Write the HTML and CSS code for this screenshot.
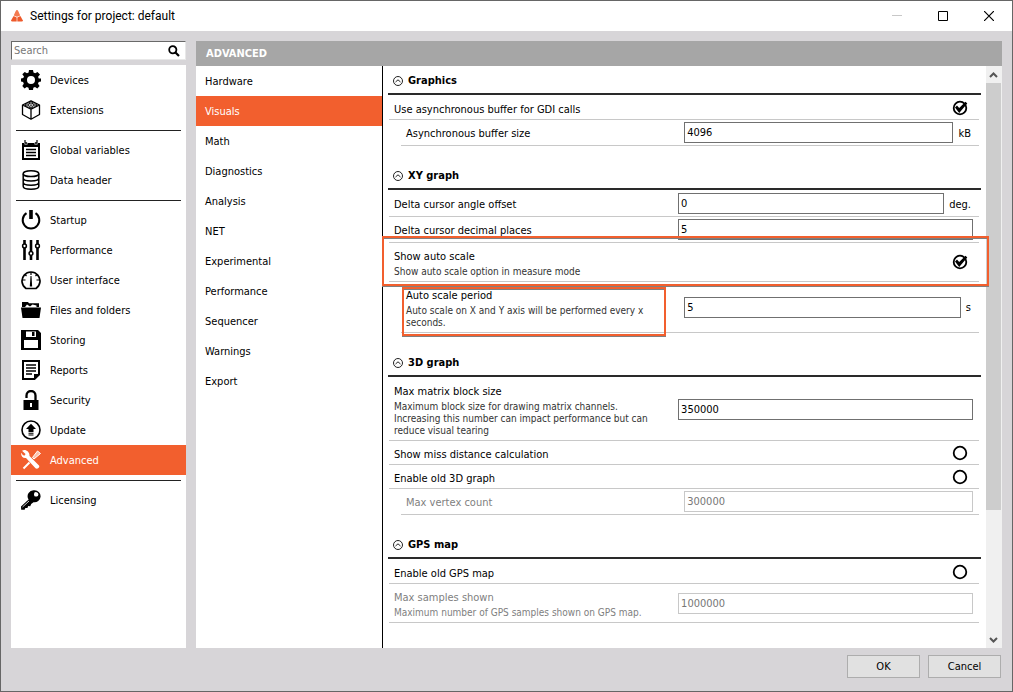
FILE: index.html
```
<!DOCTYPE html>
<html lang="en">
<head>
    <meta charset="UTF-8">
    <meta name="viewport" content="width=device-width, initial-scale=1.0">
    <title>Settings for project: default</title>
    <link rel="stylesheet" href="styles.css">
</head>
<body>
    <div class="window">
        <header class="titlebar">
            <svg class="logo" width="12" height="12" viewBox="0 0 12 12"><path d="M6 0C7 0 7.500 1.500 9.200 5.500L6 6.800 2.800 5.500C4.500 1.500 5 0 6 0z" fill="#f47a50"/><path d="M2.600 6 5.700 7.400V11.500H1.200C0 11.500-.2 11 .2 10.200z" fill="#ee5a2c"/><path d="M9.400 6 6.300 7.400V11.500h4.500c1.200 0 1.400-.5 1-1.300z" fill="#ee5a2c"/></svg>
            <h1>Settings for project: default</h1>
            <div class="window-buttons">
                <button type="button" aria-label="Minimize"><svg width="10" height="10" viewBox="0 0 10 10"><path d="M0 4.500h10" stroke="#c8c8c8"/></svg></button>
                <button type="button" aria-label="Maximize"><svg width="10" height="10" viewBox="0 0 10 10"><path d="M.5.500h9v9h-9z" fill="none" stroke="#000"/></svg></button>
                <button type="button" aria-label="Close"><svg width="10" height="10" viewBox="0 0 10 10"><path d="M0 0l10 10M10 0 0 10" stroke="#000" stroke-width="1.200"/></svg></button>
            </div>
        </header>

        <div class="body">
            <aside class="sidebar">
                <div class="search">
                    <input type="text" placeholder="Search" aria-label="Search">
                    <svg width="12" height="12" viewBox="0 0 12 12"><circle cx="4.800" cy="4.800" r="3.600" fill="none" stroke="#000" stroke-width="1.800"/><path d="M7.500 7.500l3.500 3.500" stroke="#000" stroke-width="2.200"/></svg>
                </div>
                <nav class="menu">
                    <a href="#"><svg viewBox="0 0 20 20"><path d="M8 0h4l.5 2.600 1.700.7L16.500 2 19 4.500l-1.900 2.300.6 1.600L20 8.500v3l-2.300.5-.7 1.700 1.600 2.300-2.300 2.500-2.300-1.500-1.700.7L12 20H8l-.5-2.300-1.700-.7-2.300 1.500L1.300 16l1.500-2.300-.7-1.700L0 11.500v-3L2.300 8l.7-1.600L1.300 4.200 3.700 2 6 3.300l1.600-.7zM10 6a4 4 0 1 0 0 8 4 4 0 0 0 0-8z" fill-rule="evenodd"/></svg>Devices</a>
                    <a href="#"><svg viewBox="0 0 20 20"><g fill="none" stroke="#000" stroke-width="1.300" stroke-linejoin="round"><path d="M10 .8 18.500 5v9.500L10 19.200 1.500 14.500V5zM1.500 5 10 9.200 18.500 5M10 9.200v10"/><g stroke-width="1"><ellipse cx="10" cy="3" rx="1.900" ry="1"/><ellipse cx="6" cy="5" rx="1.900" ry="1"/><ellipse cx="14" cy="5" rx="1.900" ry="1"/><ellipse cx="10" cy="6.800" rx="1.900" ry="1"/><path d="M8.100 3v1.200M11.900 3v1.200M4.100 5v1M15.900 5v1"/></g></g></svg>Extensions</a>
                    <hr>
                    <a href="#"><svg viewBox="0 0 20 20"><path d="M1 3h2.500v1.500h3V3h7v1.500h3V3H19v17H1zM3 7v11h14V7z" fill-rule="evenodd"/><path d="M4 0v2.500l1 1 1-1M16 0v2.500l-1 1-1-1" fill="none" stroke="#000" stroke-width="1.200"/><path d="M5 9.500h10M5 12.500h10M5 15.500h10" stroke="#000" stroke-width="1.500"/></svg>Global variables</a>
                    <a href="#"><svg viewBox="0 0 20 20"><g fill="none" stroke="#000" stroke-width="1.500"><ellipse cx="10" cy="3.700" rx="7.800" ry="2.900"/><path d="M2.200 3.700v12.500c0 4 15.600 4 15.600 0V3.700M2.200 8c0 4 15.600 4 15.600 0M2.200 12.200c0 4 15.600 4 15.600 0"/></g></svg>Data header</a>
                    <hr>
                    <a href="#"><svg viewBox="0 0 20 20"><path d="M5.500 3.200a8.300 8.300 0 1 0 9 0" fill="none" stroke="#000" stroke-width="2"/><path d="M8.200 0h3.600v9H8.200z"/></svg>Startup</a>
                    <a href="#"><svg viewBox="0 0 20 20"><path d="M3.500 0v4M3.500 8v12M10 0v11M10 16v4M16.500 0v4M16.500 8v12" stroke="#000" stroke-width="2.600"/><g fill="#fff" stroke="#000" stroke-width="1.500"><circle cx="3.500" cy="6" r="1.900"/><circle cx="10" cy="13.500" r="1.900"/><circle cx="16.500" cy="6" r="1.900"/></g></svg>Performance</a>
                    <a href="#"><svg viewBox="0 0 20 20"><path d="M5 18.500a9 9 0 1 1 10 0z" fill="none" stroke="#000" stroke-width="1.700"/><path d="M10 2v3M1.500 10h3M15.500 10h3M4 4.500l1.500 1.500M16 4.500 14.500 6" stroke="#000" stroke-width="1.200"/><path d="M9.500 6h1l.7 10.500H8.800z"/></svg>User interface</a>
                    <a href="#"><svg viewBox="0 0 20 20"><path d="M1 2h6l1 1.200h10V7H1z"/><path d="M4 7 6 4.500l3 2 2.500-2 4 1V7z" fill="#fff"/><path d="M0 7.500h20L18.500 18h-17z"/></svg>Files and folders</a>
                    <a href="#"><svg viewBox="0 0 20 20"><path d="M0 0h17l3 3v17H0zM5 1.500V7h10V1.500zM3 10v8h14v-8z" fill-rule="evenodd"/><path d="M11 2h2.500v4H11z"/></svg>Storing</a>
                    <a href="#"><svg viewBox="0 0 20 20"><path d="M2 1h16v13.500L13.500 19H2z" fill="none" stroke="#000" stroke-width="2"/><path d="M13 19v-5h5z"/><path d="M5 5h10M5 8h10M5 11h10M5 14h6" stroke="#000" stroke-width="1.400"/></svg>Reports</a>
                    <a href="#"><svg viewBox="0 0 20 20"><path d="M5.500 8V5.500a4.500 4.500 0 0 1 9 0V11" fill="none" stroke="#000" stroke-width="2.300"/><path d="M2.500 10h15v10h-15zM9 13v4h2v-4z" fill-rule="evenodd"/></svg>Security</a>
                    <a href="#"><svg viewBox="0 0 20 20"><circle cx="10" cy="10" r="9" fill="none" stroke="#000" stroke-width="1.600"/><path d="M10 3.800 15 9h-2.500v3h-5V9H5zM7.500 12.800h5v1h-5zM7.500 14.600h5v1h-5z"/></svg>Update</a>
                    <a href="#" class="active"><svg viewBox="0 0 20 20"><path d="M1 .8 4.500 4 3.800 5.500 2 5.200.2 2.800C-.3 5.500 1.500 8.500 5 8l9.500 10.300c1.500 1.500 4.800-.8 3.500-2.700L8.500 6C8.800 2.500 5.500-.5 2.500.2z" fill="#fff"/><path d="M2.500 18.500 8.500 12.500" stroke="#fff" stroke-width="2"/><path d="M11.500 7.500 16.500 1l3 2.500-6.500 5.500z" fill="#fbc1aa" stroke="#fff"/></svg>Advanced</a>
                    <hr>
                    <a href="#"><svg viewBox="0 0 20 20"><path d="M13.500.3a6 6 0 1 1-1 11.900l-2.300 1.900-1 2.200-2-.2-.8 2-2-.2-.8 1.900H.2L0 16.500l7.600-7A6 6 0 0 1 13.500.3zM15.600 2.200a2.200 2.200 0 1 0 .1 4.300 2.200 2.200 0 0 0-.1-4.300z" fill-rule="evenodd"/><path d="M1.500 17l6.500-6" stroke="#fff" stroke-width=".8"/></svg>Licensing</a>
                </nav>
            </aside>

            <main class="main">
                <h2 class="main-title">ADVANCED</h2>
                <div class="panes">
                    <nav class="subnav">
                        <a href="#">Hardware</a>
                        <a href="#" class="active">Visuals</a>
                        <a href="#">Math</a>
                        <a href="#">Diagnostics</a>
                        <a href="#">Analysis</a>
                        <a href="#">NET</a>
                        <a href="#">Experimental</a>
                        <a href="#">Performance</a>
                        <a href="#">Sequencer</a>
                        <a href="#">Warnings</a>
                        <a href="#">Export</a>
                    </nav>

                    <div class="settings">
                        <section>
                            <h3><svg viewBox="0 0 10 10"><circle cx="5" cy="5" r="4.500"/><path d="M2.500 6 5 3.800 7.500 6"/></svg>Graphics</h3>
                            <div class="row">
                                <label for="asyncBuffer">Use asynchronous buffer for GDI calls</label>
                                <div class="toggle">
                                    <input type="checkbox" id="asyncBuffer" checked>
                                    <svg viewBox="0 0 16 16"><path d="M3 7.500 5 5.500 7.200 8 13.500 1.800 15.300 3.500 7.200 13z"/></svg>
                                </div>
                            </div>
                            <div class="row indent">
                                <label for="bufferSize">Asynchronous buffer size</label>
                                <div class="field"><input type="text" id="bufferSize" value="4096"><span>kB</span></div>
                            </div>
                        </section>

                        <section>
                            <h3><svg viewBox="0 0 10 10"><circle cx="5" cy="5" r="4.500"/><path d="M2.500 6 5 3.800 7.500 6"/></svg>XY graph</h3>
                            <div class="row">
                                <label for="angleOffset">Delta cursor angle offset</label>
                                <div class="field"><input type="text" id="angleOffset" value="0"><span>deg.</span></div>
                            </div>
                            <div class="row">
                                <label for="decimalPlaces">Delta cursor decimal places</label>
                                <div class="field"><input type="text" id="decimalPlaces" value="5"></div>
                            </div>
                            <div class="row">
                                <label for="autoScale">Show auto scale <small>Show auto scale option in measure mode</small></label>
                                <div class="toggle">
                                    <input type="checkbox" id="autoScale" checked>
                                    <svg viewBox="0 0 16 16"><path d="M3 7.500 5 5.500 7.200 8 13.500 1.800 15.300 3.500 7.200 13z"/></svg>
                                </div>
                                <div class="marker marker-row"></div>
                            </div>
                            <div class="row indent">
                                <label for="autoScalePeriod">Auto scale period <small>Auto scale on X and Y axis will be performed every x seconds.</small></label>
                                <div class="field"><input type="text" id="autoScalePeriod" value="5"><span>s</span></div>
                                <div class="marker marker-label"></div>
                            </div>
                        </section>

                        <section>
                            <h3><svg viewBox="0 0 10 10"><circle cx="5" cy="5" r="4.500"/><path d="M2.500 6 5 3.800 7.500 6"/></svg>3D graph</h3>
                            <div class="row">
                                <label for="matrixSize">Max matrix block size <small>Maximum block size for drawing matrix channels. Increasing this number can impact performance but can reduce visual tearing</small></label>
                                <div class="field"><input type="text" id="matrixSize" value="350000"></div>
                            </div>
                            <div class="row">
                                <label for="missDistance">Show miss distance calculation</label>
                                <div class="toggle"><input type="checkbox" id="missDistance"></div>
                            </div>
                            <div class="row">
                                <label for="old3d">Enable old 3D graph</label>
                                <div class="toggle"><input type="checkbox" id="old3d"></div>
                            </div>
                            <div class="row indent disabled">
                                <label for="vertexCount">Max vertex count</label>
                                <div class="field"><input type="text" id="vertexCount" value="300000" disabled></div>
                            </div>
                        </section>

                        <section>
                            <h3><svg viewBox="0 0 10 10"><circle cx="5" cy="5" r="4.500"/><path d="M2.500 6 5 3.800 7.500 6"/></svg>GPS map</h3>
                            <div class="row">
                                <label for="oldGps">Enable old GPS map</label>
                                <div class="toggle"><input type="checkbox" id="oldGps"></div>
                            </div>
                            <div class="row disabled">
                                <label for="maxSamples">Max samples shown <small>Maximum number of GPS samples shown on GPS map.</small></label>
                                <div class="field"><input type="text" id="maxSamples" value="1000000" disabled></div>
                            </div>
                        </section>
                    </div>

                    <div class="scrollbar">
                        <button type="button" aria-label="Scroll up"><svg width="9" height="6" viewBox="0 0 9 6"><path d="M1 5l3.500-3.500L8 5"/></svg></button>
                        <div class="track"><div class="thumb"></div></div>
                        <button type="button" aria-label="Scroll down"><svg width="9" height="6" viewBox="0 0 9 6"><path d="M1 1l3.500 3.500L8 1"/></svg></button>
                    </div>
                </div>
            </main>
        </div>

        <footer class="footer">
            <button type="button">OK</button>
            <button type="button">Cancel</button>
        </footer>
    </div>
</body>
</html>
```
FILE: styles.css
```
* {
    box-sizing: border-box;
}

body {
    margin: 0;
    font-family: "DejaVu Sans Condensed", "Noto Sans", sans-serif;
    font-size: 11px;
    line-height: 14px;
    color: #000;
}

h1, h2, h3 {
    margin: 0;
    font-size: 11px;
}

a {
    color: inherit;
    text-decoration: none;
}

button, input {
    font: inherit;
    color: inherit;
}

svg {
    flex: none;
}

.window {
    display: flex;
    flex-direction: column;
    min-height: 100vh;
    background: #d7d5d8;
    border: 1px solid #666;
}

/* title bar */
.titlebar {
    display: flex;
    align-items: center;
    gap: 7px;
    height: 30px;
    padding-left: 10px;
    background: #fff;
}

.titlebar h1 {
    flex: 1;
    font-family: Roboto, "Open Sans", sans-serif;
    font-size: 12px;
    font-weight: normal;
}

.window-buttons {
    display: flex;
}

.window-buttons button {
    display: flex;
    align-items: center;
    justify-content: center;
    width: 46px;
    height: 28px;
    padding: 0;
    background: none;
    border: 0;
}

/* left side */
.body {
    display: flex;
    flex: 1;
    gap: 10px;
    padding: 10px 10px 0;
}

.sidebar {
    display: flex;
    flex-direction: column;
    gap: 5px;
    width: 175px;
}

.search {
    display: flex;
    align-items: center;
    height: 19px;
    padding-right: 5px;
    background: #fff;
    border: 1px solid #696969;
    border-color: #696969 #e8e8e8 #e8e8e8 #696969;
}

.search input {
    flex: 1;
    min-width: 0;
    padding: 0 2px;
    background: none;
    border: 0;
    outline: 0;
}

.search input::placeholder {
    color: #777;
}

.menu {
    flex: 1;
    background: #fff;
}

.menu a {
    display: flex;
    gap: 9px;
    height: 30px;
    padding: 5px 0 5px 10px;
    line-height: 22px;
}

.menu svg {
    width: 20px;
    height: 20px;
}

.menu hr {
    margin: 5px 5px 4px;
    border: 0;
    border-top: 1px solid #222;
}

.menu .active, .subnav .active {
    background: #f25f2e;
    color: #fff;
}

/* main area */
.main {
    display: flex;
    flex: 1;
    flex-direction: column;
}

.main-title {
    height: 25px;
    padding-left: 10px;
    line-height: 25px;
    background: #a6a6a6;
    color: #fff;
}

.panes {
    display: flex;
    flex: 1;
    background: #fff;
}

.subnav {
    width: 187px;
    border-right: 1px solid #000;
}

.subnav a {
    display: block;
    padding: 9px 9px 7px;
}

.settings {
    flex: 1;
    padding: 0 5px 25px;
}

.settings h3 {
    display: flex;
    align-items: center;
    gap: 5px;
    height: 29px;
    padding: 3px 0 0 5px;
    border-bottom: 2px solid #2a2a2a;
}

.settings h3 svg {
    width: 10px;
    height: 10px;
    fill: none;
    stroke: #222;
}

section + section {
    margin-top: 15px;
}

.row {
    position: relative;
    display: grid;
    grid-template-columns: 49% 51%;
    margin: 0 2px 0 1px;
    border-bottom: 1px solid #c8c8c8;
}

h3 + .row {
    padding-top: 1px;
}

.row.indent {
    margin-left: 13px;
}

.row label {
    padding: 7px 20px 2px 5px;
}

.row small {
    display: block;
    margin: 2px 0 1px;
    font-size: 10px;
    line-height: 12px;
    color: #333;
}

.disabled label, .disabled small {
    color: #808080;
}

.field {
    display: flex;
    align-items: center;
    gap: 5px;
    padding: 2px 6px 2px 0;
}

.field input {
    flex: 1;
    min-width: 0;
    height: 21px;
    padding: 0 2px;
    background: #fff;
    border: 1px solid #707070;
}

.field span {
    padding: 2px 2px 0 0;
}

.field input:disabled {
    border-color: #c8c8c8;
    color: #777;
}

.toggle {
    display: grid;
    align-content: center;
    justify-content: end;
    padding-right: 11px;
}

.toggle input, .toggle svg {
    grid-area: 1 / 1;
    width: 16px;
    height: 16px;
    margin: 0;
}

.toggle input {
    appearance: none;
    border: 2px solid #000;
    border-radius: 50%;
    transform: scale(0.9);
}

.toggle svg {
    z-index: 1;
    pointer-events: none;
}

/* highlight frames over the rows */
.marker {
    position: absolute;
    z-index: 2;
    border: 2px solid #f25f2e;
    box-shadow: 0 1px #808080, inset 0 1px #808080;
    pointer-events: none;
}

.marker-row {
    inset: -7px -10px -5px -7px;
}

.marker-label {
    top: 5px;
    bottom: -4px;
    left: 1px;
    width: 264px;
}

/* scrollbar */
.scrollbar {
    display: flex;
    flex-direction: column;
    width: 16px;
    background: #f0f0f0;
}

.scrollbar button {
    height: 17px;
    padding: 0 1px 0 0;
    background: none;
    border: 0;
}

.scrollbar path {
    fill: none;
    stroke: #555;
    stroke-width: 2;
}

.track {
    flex: 1;
    padding-right: 1px;
}

.thumb {
    height: 78%;
    background: #cdcdcd;
}

/* bottom buttons */
.footer {
    display: flex;
    justify-content: flex-end;
    gap: 8px;
    padding: 7px 11px 13px;
}

.footer button {
    width: 73px;
    height: 23px;
    padding: 0;
    background: #e1e1e1;
    border: 1px solid #adadad;
}
```
